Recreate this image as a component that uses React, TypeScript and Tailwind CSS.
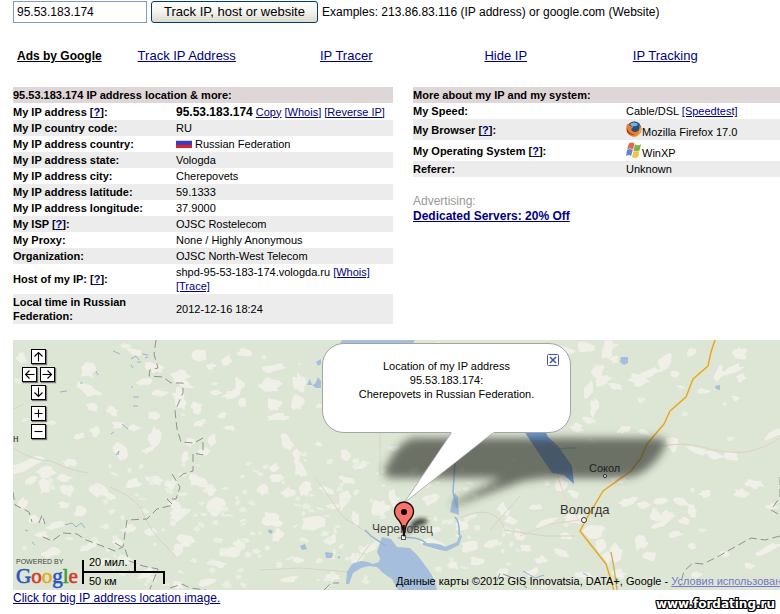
import type { ReactNode } from "react";

const link = "text-[#00007f] underline";

function Help() {
  return (
    <>
      [
      <a href="#help" className={link}>
        ?
      </a>
      ]:
    </>
  );
}

function Row({
  label,
  children,
  shaded = false,
  height = "h-4",
}: {
  label: ReactNode;
  children: ReactNode;
  shaded?: boolean;
  height?: string;
}) {
  return (
    <tr className={`${height} ${shaded ? "bg-[#ececec]" : ""}`}>
      <th scope="row" className="p-0 text-left align-middle font-bold">
        {label}
      </th>
      <td className="p-0 align-middle">{children}</td>
    </tr>
  );
}

function Flag() {
  return (
    <svg className="mr-[3px] inline-block h-2 w-4 align-baseline" viewBox="0 0 16 8" role="img" aria-label="Russia">
      <rect width="16" height="8" fill="#d4d0ea" />
      <rect y="1" width="16" height="4" fill="#3a3ac4" />
      <rect y="5" width="16" height="3" fill="#dd2222" />
    </svg>
  );
}

function FirefoxIcon() {
  return (
    <svg className="h-4 w-4 shrink-0" viewBox="0 0 16 16" aria-hidden="true">
      <circle cx="8" cy="8" r="7.6" fill="#d9611c" />
      <circle cx="8.6" cy="6.6" r="6" fill="#23507f" />
      <path d="M4 3q4-3 8 0q-1 3-4 2q-2 2-4-2Z" fill="#6cb5e2" />
      <path d="M1 3q2 0 3 2l3 1q-1 2-2 2q1 3 4 3q4 0 5-5q2 5-2 8q-4 3-8 0Q-1 10 1 3Z" fill="#e8802f" />
      <path d="M13.500 4q2.500 4 .5 8q-2 4-6 4q5-2 5.500-6q.5-3 0-6Z" fill="#f6b93d" />
      <path d="M1 7q2 6 8 6.500q-5 1.500-8-2.500Z" fill="#b63518" />
    </svg>
  );
}

function WindowsIcon() {
  return (
    <svg className="h-4 w-4 shrink-0" viewBox="0 0 16 16" aria-hidden="true">
      <path d="M3 1.500q3-2 5.500 0L7 7.500q-3-2-6 0Z" fill="#dc6a48" />
      <path d="M9 2.200q3 2 6 0L13.500 8.500q-3 2-6 0Z" fill="#7db34b" />
      <path d="M1 8q3-2 5.800 0L5 14q-2-2-5 0Z" fill="#5b86d0" />
      <path d="M7.500 9q3 2 6 0L12 15q-3 2-6 0Z" fill="#ecc544" />
    </svg>
  );
}

/* Open land on the map: centre x, centre y, width, height. */
const clearings: number[][] = [
  [22, 358, 8, 9], [88, 370, 12, 14], [88, 390, 22, 7], [92, 407, 10, 4], [112, 411, 9, 6],
  [135, 352, 12, 5], [153, 368, 16, 7], [126, 346, 8, 3], [180, 376, 18, 10], [185, 384, 14, 5],
  [200, 355, 10, 10], [227, 360, 6, 8], [239, 385, 6, 12], [232, 394, 14, 6], [242, 403, 6, 7],
  [211, 366, 5, 4], [154, 438, 9, 18], [180, 400, 8, 20], [197, 408, 8, 10], [155, 416, 9, 8],
  [145, 382, 12, 4], [160, 393, 14, 5], [118, 425, 8, 5], [133, 428, 10, 4], [120, 452, 8, 16],
  [95, 431, 6, 8], [79, 436, 8, 4], [70, 463, 14, 5], [28, 464, 30, 7], [46, 472, 18, 8],
  [212, 440, 5, 10], [204, 452, 8, 5], [189, 442, 6, 6], [200, 423, 8, 4], [222, 416, 7, 4],
  [185, 457, 6, 8], [148, 450, 8, 4], [245, 352, 12, 7], [216, 393, 8, 3], [229, 428, 9, 3],
  [275, 368, 20, 6], [270, 386, 18, 13], [274, 404, 12, 11], [277, 417, 18, 5], [300, 384, 8, 18],
  [297, 402, 10, 14], [286, 442, 8, 14], [297, 455, 6, 12], [300, 469, 7, 15], [320, 406, 5, 3],
  [346, 455, 7, 7], [362, 466, 7, 4], [274, 468, 8, 6], [319, 444, 4, 3], [394, 448, 8, 3],
  [608, 350, 9, 15], [614, 359, 6, 5], [598, 371, 8, 13], [603, 381, 13, 6], [588, 391, 5, 16],
  [594, 407, 5, 16], [589, 420, 11, 4], [615, 386, 14, 4], [639, 380, 15, 12], [650, 373, 16, 5],
  [663, 365, 8, 14], [668, 358, 5, 7], [740, 353, 10, 10], [719, 374, 6, 12], [733, 370, 18, 5],
  [741, 378, 7, 5], [703, 391, 10, 3], [691, 352, 6, 6], [675, 374, 7, 4], [567, 350, 12, 3],
  [585, 347, 12, 9], [673, 444, 10, 14], [697, 450, 16, 4], [714, 455, 15, 5], [730, 456, 11, 6],
  [774, 434, 16, 4], [623, 430, 9, 4], [644, 432, 11, 3], [577, 428, 8, 6], [736, 398, 4, 3],
  [30, 481, 9, 4], [45, 486, 9, 14], [63, 478, 14, 5], [68, 490, 14, 10], [22, 503, 6, 10],
  [98, 490, 17, 9], [111, 497, 9, 5], [132, 484, 14, 7], [155, 480, 14, 5], [170, 485, 10, 7],
  [175, 505, 8, 8], [197, 481, 17, 9], [210, 490, 10, 7], [217, 507, 14, 18], [179, 514, 19, 10],
  [185, 541, 14, 9], [179, 550, 8, 9], [232, 552, 23, 9], [239, 545, 9, 8], [219, 564, 10, 5],
  [151, 532, 10, 5], [130, 528, 10, 7], [57, 525, 16, 5], [90, 546, 15, 4], [125, 559, 10, 5],
  [101, 562, 15, 4], [41, 535, 13, 5], [34, 519, 8, 8], [65, 505, 8, 5], [80, 511, 9, 8],
  [207, 582, 15, 5], [178, 585, 9, 5], [146, 574, 14, 5], [118, 543, 9, 5], [51, 553, 15, 6],
  [264, 489, 9, 9], [277, 478, 11, 6], [288, 493, 10, 8], [306, 488, 8, 13], [327, 490, 12, 5],
  [333, 506, 10, 4], [272, 520, 16, 11], [278, 535, 7, 12], [312, 523, 20, 11], [331, 540, 10, 7],
  [347, 480, 12, 5], [344, 500, 7, 18], [355, 518, 6, 12], [380, 508, 16, 14], [393, 499, 6, 16],
  [431, 500, 13, 8], [435, 530, 10, 6], [432, 544, 18, 8], [470, 546, 15, 8], [477, 561, 11, 6],
  [493, 543, 13, 5], [453, 565, 7, 6], [503, 509, 6, 12], [462, 526, 11, 8], [299, 560, 8, 4],
  [356, 558, 9, 8], [331, 578, 12, 5], [289, 579, 12, 4], [503, 573, 8, 6], [369, 548, 13, 6],
  [575, 519, 17, 8], [592, 531, 18, 12], [600, 545, 8, 12], [616, 554, 9, 16], [606, 560, 6, 13],
  [641, 543, 11, 10], [546, 522, 17, 4], [566, 536, 8, 5], [628, 502, 14, 6], [643, 505, 12, 4],
  [660, 501, 13, 4], [667, 516, 13, 7], [655, 515, 6, 10], [659, 525, 13, 4], [681, 502, 12, 6],
  [692, 511, 6, 11], [684, 521, 8, 5], [675, 534, 12, 4], [705, 494, 9, 5], [741, 493, 12, 7],
  [754, 484, 13, 7], [650, 556, 9, 8], [692, 546, 5, 4], [618, 573, 12, 6], [541, 560, 10, 5],
  [561, 553, 12, 4], [526, 548, 8, 5], [533, 572, 10, 5], [768, 549, 17, 5], [724, 554, 8, 4],
  [561, 484, 9, 14], [574, 494, 10, 5], [771, 507, 9, 4], [697, 575, 8, 5], [749, 566, 7, 4],
  [510, 520, 9, 5], [535, 507, 12, 4], [618, 480, 14, 5], [585, 575, 14, 5], [519, 536, 9, 6],
];

/* Deterministic noise, so that the coastline of every patch is stable between renders. */
function noise(n: number) {
  const v = Math.sin(n * 127.1 + 311.7) * 43758.5453;
  return v - Math.floor(v);
}

function patch(cx: number, cy: number, w: number, h: number, seed: number) {
  const tilt = noise(seed + 3) * 0.9 - 0.45;
  const points: string[] = [];
  for (let i = 0; i < 13; i++) {
    const a = (i / 13) * Math.PI * 2;
    const r = 0.32 + noise(seed * 17 + i) * 0.34;
    const x = Math.cos(a) * w * r;
    const y = Math.sin(a) * h * r;
    points.push(`${(cx + x - y * tilt).toFixed(1)} ${(cy + y + x * tilt).toFixed(1)}`);
  }
  return `M${points.join("L")}Z`;
}

const clearingPath = clearings.map(([x, y, w, h], i) => patch(x, y, w + 3, h + 2, i + 1)).join("");

const speckPath = Array.from({ length: 230 }, (_, i) => {
  const west = i % 4 !== 0;
  const x = west ? 100 + noise(i * 3 + 1) * 420 : 13 + noise(i * 3 + 1) * 767;
  const y = west ? 460 + noise(i * 5 + 2) * 128 : 342 + noise(i * 5 + 2) * 246;
  return patch(x, y, 3 + noise(i + 90) * 6, 2 + noise(i + 40) * 4, i + 500);
}).join("");

function Terrain() {
  return (
    <svg className="absolute top-0 left-0 h-[250px] w-[767px]" viewBox="13 340 767 250" aria-hidden="true">
      <defs>
        <filter id="soft" x="-20%" y="-50%" width="140%" height="200%">
          <feGaussianBlur stdDeviation="4" />
        </filter>
        <filter id="pinSoft" x="-50%" y="-50%" width="200%" height="200%">
          <feGaussianBlur stdDeviation="2" />
        </filter>
      </defs>
      <rect x="13" y="340" width="767" height="250" fill="#dde6d4" />
      <path d={clearingPath} fill="#f0f0e9" />
      <path d={speckPath} fill="#ebefe3" />

      {/* minor roads */}
      <g fill="none" stroke="#d8d2c4" strokeWidth="1">
        <path d="M13 409l12-5M13 448q20 13 38 13q20 10 37 12" />
        <path d="M110 487q20 8 30 20q12 28 25 38l11 12M315 477l28 40l22 14" />
        <path d="M662 446q22-4 40 1q24 7 45 5q18-4 33-14" stroke="#e2cfc0" />
        <path d="M520 536l30-12l30-4M557 474l8 24l15 24" stroke="#ead3c4" />
        <path d="M260 570l40-2l50 4l20-28M460 518q35-16 45 12l40 6h30M380 345v130M490 530l30-34" />
      </g>

      {/* water */}
      <g fill="#a4bedb">
        <path d="M342 340h73l-4 6h-72Z" />
        <path d="M307 385l3-6l2 6l3-1l3-7l3 4v7h-5l-4-3ZM316 362l5-3v5l-3 2ZM621 357h7v6l-4 2l-4-3ZM715 386l5-1v5l-4-1Z" />
        <path d="M382 537l9 2l6 8l13 1l8 8l9 12l6 9l4 13h-39l-6-11l-9-6l-6-6l-8-1l-8 2l-8 5l-4 11h-3l1-12l5-8l9-3l7 1l5 2l6-2l1-4l-3-6Z" />
        <path d="M452 502l3-9l3 4l1 18l-9-3ZM423 543q18 0 22 4l12-5l3-8l2 2l-3 9l-12 6l-8-1l-16-5Z" />
        <path d="M269 529l4 2l-2 3l-3-2ZM300 546l5-2l2 5l-5 1ZM325 552l8 1l-1 5h-6ZM337 557l3-1v3Z" />
        <path d="M522 428h22l4 9l10 9l14 20l2 18l-10-9l-12-2l-14-21Z" fill="#6f9bd8" />
      </g>
      <g fill="none" stroke="#98b2d4" strokeWidth="1">
        <path d="M386 546l-15-10l-6-6M398 538q20-2 28 5M459 535q1-13-4-18M455 462l-2 30l4 16" strokeWidth="1.500" />
        <path d="M60 392l7-1M113 351l7 3M96 371l2 4M133 397h6M133 406h5M122 424l6 5M116 455l3-4l-1 4M131 359l5-3l3 4M142 354l6 1M137 362h4M145 358l3-1M131 365l2 3M25 530l3 1M32 542l3 3M65 525l7-2l4 4l5-4l4 5M80 383h3M131 387h2M111 434l3-2" />
        <path d="M583 573l5 3M523 571l12 7l9-3M549 440q10 12 18 8h10" />
      </g>

      {/* region borders */}
      <g fill="none" stroke="#8f938b" strokeWidth="1" strokeDasharray="8 4">
        <path d="M156 340l-2 14l4 14l-8 2l-1 6l14 1l8 6h12v10l-8 18l2 18l4 13l13 1l9-5v17l-10-2v18l-10 3l-6 5" />
        <path d="M172 474l8 13l-4 12h-9l6 6l-16 4l-10 10l-20 1l-2 13l-2 14l-8 4l-18-7l-11-4l-9-6l-14-1l-11 8l-11-5M13 492l2 13l14 7l3 10M39 523l3-8l3 9M115 543l10 6l4 12l14 5l15 3l-8 20" />
        <path d="M780 477v20l-9 13l9 5M780 536l-15 4l-14-2l-18 10l-14 8l-16 8l-10-1l-9 8l-4 15M324 590l7-7h8M497 581l3-8l8 3l8 3l11 9M170 588l12-4l8 4l16 2" />
      </g>

      {/* motorways */}
      <g fill="none" strokeLinejoin="round">
        <path
          d="M715 340l-4 12l-3 14l-15 13l-7 18l-16 14l-6 13l-17 20l-6 14l-10 13l-28 20l-16 27l-7 13l11 14l15 19l5 16l3 11"
          stroke="#f5dfa0"
          strokeWidth="3"
        />
        <path
          d="M715 340l-4 12l-3 14l-15 13l-7 18l-16 14l-6 13l-17 20l-6 14l-10 13l-28 20l-16 27l-7 13l11 14l15 19l5 16l3 11M611 552l3 16l3 22"
          stroke="#cfa748"
          strokeWidth="1.300"
        />
      </g>

      {/* balloon shadow */}
      <path
        d="M412 438h247q10 2 6 8q-6 15-22 26q-10 6-28 6h-70l-22 3l-64 23q-12 3-6-1l48-25h-110q-12-3-4-12q8-20 25-28Z"
        fill="#30352d"
        opacity=".66"
        filter="url(#soft)"
      />
      <path d="M405 535l8-14q8-5 15-1q0 4-10 6Z" fill="#252822" opacity=".85" filter="url(#pinSoft)" />
    </svg>
  );
}

function Balloon() {
  return (
    <div className="absolute top-[3px] left-[309px] h-[90px] w-[249px] rounded-[22px] border border-[#a4a4a4] bg-white">
      <svg className="absolute top-[87px] left-[80px] h-[74px] w-[94px]" viewBox="0 0 94 74" aria-hidden="true">
        <path d="M49 1L1 72L91 1" fill="#fff" stroke="#a4a4a4" strokeWidth=".8" />
        <path d="M49 0h43l-2 2H48Z" fill="#fff" />
      </svg>
      <p className="pt-[15px] text-center text-[11px] leading-[14px]">
        Location of my IP address
        <br />
        95.53.183.174:
        <br />
        Cherepovets in Russian Federation.
      </p>
      <button type="button" aria-label="Close" className="absolute top-[10px] right-[11px] h-3 w-3">
        <svg className="block h-3 w-3" viewBox="0 0 12 12" aria-hidden="true">
          <rect x=".5" y=".5" width="11" height="11" rx="1" fill="#fff" stroke="#4653a0" />
          <path d="M3 3l6 6M9 3l-6 6" stroke="#4653a0" strokeWidth="1.500" />
        </svg>
      </button>
    </div>
  );
}

function Pin() {
  return (
    <svg className="absolute top-[161px] left-[380px] h-[41px] w-[22px]" viewBox="0 0 22 41" aria-hidden="true">
      <rect x="8.500" y="34.500" width="4" height="4" fill="#fff" stroke="#555" />
      <path
        d="M11 35.500q-1-11-5-16q-4.500-4.500-4.500-9a9.300 9.300 0 0 1 19 0q0 4.500-4.500 9q-4 5-5 16Z"
        fill="#f9736a"
        stroke="#1c0b0a"
        strokeWidth="1.400"
      />
      <circle cx="11" cy="11" r="3" fill="#000" />
      <path d="M10.800 24v11" stroke="#1c0b0a" strokeWidth="2" />
    </svg>
  );
}

const controls = [
  { name: "Pan up", spot: "col-start-1 col-span-2", path: "M7 12V3M3 7l4-4l4 4", gap: "" },
  { name: "Pan left", spot: "", path: "M12 7H3M7 3L3 7l4 4", gap: "" },
  { name: "Pan right", spot: "", path: "M2 7h9M7 3l4 4l-4 4", gap: "" },
  { name: "Pan down", spot: "col-start-1 col-span-2", path: "M7 2v9M3 7l4 4l4-4", gap: "" },
  { name: "Zoom in", spot: "col-start-1 col-span-2", path: "M7 3v8M3 7h8", gap: "mt-[3px]" },
  { name: "Zoom out", spot: "col-start-1 col-span-2", path: "M3 7h8", gap: "" },
];

function MapControls() {
  return (
    <div className="absolute top-[9px] left-[9px] grid grid-cols-2 gap-x-[3px] gap-y-[3px]">
      {controls.map((c) => (
        <button
          key={c.name}
          type="button"
          aria-label={c.name}
          className={`h-[15px] w-[15px] justify-self-center border border-black bg-white shadow-[1px_1px_1px_#777] ${c.spot} ${c.gap}`}
        >
          <svg className="block h-[13px] w-[13px]" viewBox="0.500 0.500 13 13" aria-hidden="true">
            <path d={c.path} fill="none" stroke="#000" strokeWidth="1.100" />
          </svg>
        </button>
      ))}
    </div>
  );
}

function GoogleMark() {
  return (
    <div className="absolute bottom-[3px] left-[3px]">
      <div className="text-[7px] leading-[8px] text-[#444]">POWERED BY</div>
      <div className="font-['Liberation_Serif',serif] text-[21px] leading-[21px] [-webkit-text-stroke:0.6px_currentColor]">
        <span className="text-[#2a55c0]">G</span>
        <span className="text-[#d33a2c]">o</span>
        <span className="text-[#dfae20]">o</span>
        <span className="text-[#2a55c0]">g</span>
        <span className="text-[#3a9a3c]">l</span>
        <span className="text-[#d33a2c]">e</span>
      </div>
    </div>
  );
}

function ScaleBar() {
  return (
    <div className="absolute bottom-[5px] left-[69px] h-[26px] w-[83px] text-[11px] leading-[14px]">
      <svg className="absolute top-0 left-0 h-[26px] w-[83px]" viewBox="0 0 83 26" aria-hidden="true">
        <path d="M1 1v24M1 13h81v12M53 1v12" fill="none" stroke="#000" strokeWidth="2" />
      </svg>
      <span className="absolute -top-1 left-[7px] whitespace-nowrap">20 мил.</span>
      <span className="absolute top-[15px] left-[7px] whitespace-nowrap">50 км</span>
    </div>
  );
}

function LocationMap() {
  return (
    <section aria-label="Map" className="relative h-[250px] overflow-hidden bg-[#dde6d4]">
      <Terrain />
      <span className="absolute top-[93px] left-0 text-[10px] leading-3 text-[#333]">н</span>
      <span className="absolute top-[121px] left-[576px] text-[11px] leading-[14px] text-[#222]">Сокол</span>
      <span className="absolute top-[162px] left-[547px] text-[13px] leading-4 text-[#333]">Вологда</span>
      <span className="absolute top-[181px] left-[359px] text-[12px] leading-4 text-[#444]">Череповец</span>
      <span className="absolute top-[134px] left-[590px] h-1 w-1 rounded-full border border-[#222] bg-white" />
      <span className="absolute top-[177px] left-[568px] h-[6px] w-[6px] rounded-full border border-[#333] bg-white" />
      <Balloon />
      <Pin />
      <MapControls />
      <GoogleMark />
      <ScaleBar />
      <p className="absolute bottom-[2px] left-[383px] text-[11px] leading-[14px] whitespace-nowrap">
        Данные карты ©2012 GIS Innovatsia, DATA+, Google -{" "}
        <a href="#terms" className="text-[#7777cc] underline">
          Условия использования
        </a>
      </p>
    </section>
  );
}

export default function App() {
  return (
    <main className="overflow-hidden bg-white pt-px pl-[13px] font-['Liberation_Sans',Arial,sans-serif] text-[11px] leading-[14px] text-black">
      <form className="flex items-center gap-1 text-[12px]" onSubmit={(e) => e.preventDefault()}>
        <input
          aria-label="IP, host or website"
          defaultValue="95.53.183.174"
          className="h-[22px] w-[134px] border border-[#7f9db9] px-[3px] text-[12px]"
        />
        <button
          type="submit"
          className="h-[22px] w-[167px] rounded-[3px] border border-[#003c74] bg-linear-to-b from-white via-[#f3f3ee] to-[#dcdad0] text-[13px] whitespace-nowrap"
        >
          Track IP, host or website
        </button>
        <span className="whitespace-nowrap">Examples: 213.86.83.116 (IP address) or google.com (Website)</span>
      </form>

      <nav className="mt-[25px] flex h-4 items-center pr-[35px]">
        <a href="#ads" className="w-[94px] pl-1 text-[12px] font-bold whitespace-nowrap underline">
          Ads by Google
        </a>
        <div className="grid flex-1 grid-cols-4 text-center text-[13px]">
          {["Track IP Address", "IP Tracer", "Hide IP", "IP Tracking"].map((t) => (
            <a key={t} href="#ad" className={link}>
              {t}
            </a>
          ))}
        </div>
      </nav>

      <div className="mt-[23px] flex items-start gap-5">
        <table className="w-[380px] shrink-0 table-fixed border-collapse">
          <colgroup>
            <col className="w-[163px]" />
            <col />
          </colgroup>
          <thead>
            <tr className="h-4 bg-[#dfd6d8]">
              <th colSpan={2} className="p-0 text-left">
                95.53.183.174 IP address location &amp; more:
              </th>
            </tr>
          </thead>
          <tbody>
            <Row height="h-[17px]" label={<>My IP address <Help /></>}>
              <b className="text-[12px]">95.53.183.174</b>{" "}
              <a href="#copy" className={link}>Copy</a>{" "}
              <a href="#whois" className={link}>[Whois]</a>{" "}
              <a href="#reverse" className={link}>[Reverse IP]</a>
            </Row>
            <Row shaded label="My IP country code:">RU</Row>
            <Row label="My IP address country:">
              <Flag />
              Russian Federation
            </Row>
            <Row shaded label="My IP address state:">Vologda</Row>
            <Row label="My IP address city:">Cherepovets</Row>
            <Row shaded label="My IP address latitude:">59.1333</Row>
            <Row label="My IP address longitude:">37.9000</Row>
            <Row shaded label={<>My ISP <Help /></>}>OJSC Rostelecom</Row>
            <Row label="My Proxy:">None / Highly Anonymous</Row>
            <Row shaded label="Organization:">OJSC North-West Telecom</Row>
            <Row height="h-[30px]" label={<>Host of my IP: <Help /></>}>
              shpd-95-53-183-174.vologda.ru <a href="#whois-host" className={link}>[Whois]</a>
              <br />
              <a href="#trace" className={link}>[Trace]</a>
            </Row>
            <Row
              shaded
              height="h-[30px]"
              label={
                <>
                  Local time in Russian
                  <br />
                  Federation:
                </>
              }
            >
              2012-12-16 18:24
            </Row>
          </tbody>
        </table>

        <div className="min-w-0 flex-1">
          <table className="w-full table-fixed border-collapse">
            <colgroup>
              <col className="w-[213px]" />
              <col />
            </colgroup>
            <thead>
              <tr className="h-4 bg-[#dfd6d8]">
                <th colSpan={2} className="p-0 text-left">
                  More about my IP and my system:
                </th>
              </tr>
            </thead>
            <tbody>
              <Row label="My Speed:">
                Cable/DSL <a href="#speed" className={link}>[Speedtest]</a>
              </Row>
              <Row shaded height="h-[21px]" label={<>My Browser <Help /></>}>
                <span className="flex h-[18px] items-start">
                  <FirefoxIcon />
                  <span className="pt-1">Mozilla Firefox 17.0</span>
                </span>
              </Row>
              <Row height="h-[21px]" label={<>My Operating System <Help /></>}>
                <span className="flex h-[18px] items-start">
                  <WindowsIcon />
                  <span className="pt-1">WinXP</span>
                </span>
              </Row>
              <Row shaded label="Referer:">Unknown</Row>
            </tbody>
          </table>
          <div className="mt-[17px] text-[12px] leading-[15px]">
            <div className="text-[#999]">Advertising:</div>
            <a href="#servers" className={`${link} font-bold`}>
              Dedicated Servers: 20% Off
            </a>
          </div>
        </div>
      </div>

      <div className="mt-4">
        <LocationMap />
      </div>

      <footer className="flex items-start justify-between pr-[5px]">
        <a href="#big" className={`${link} text-[12px] leading-4`}>
          Click for big IP address location image.
        </a>
        <span className="pt-[6px] font-['DejaVu_Sans',sans-serif] text-[12px] leading-4 font-bold text-white [text-shadow:1px_0_#000,-1px_0_#000,0_1px_#000,0_-1px_#000,1px_1px_#000,-1px_-1px_#000,1px_-1px_#000,-1px_1px_#000]">
          www.fordating.ru
        </span>
      </footer>
    </main>
  );
}
